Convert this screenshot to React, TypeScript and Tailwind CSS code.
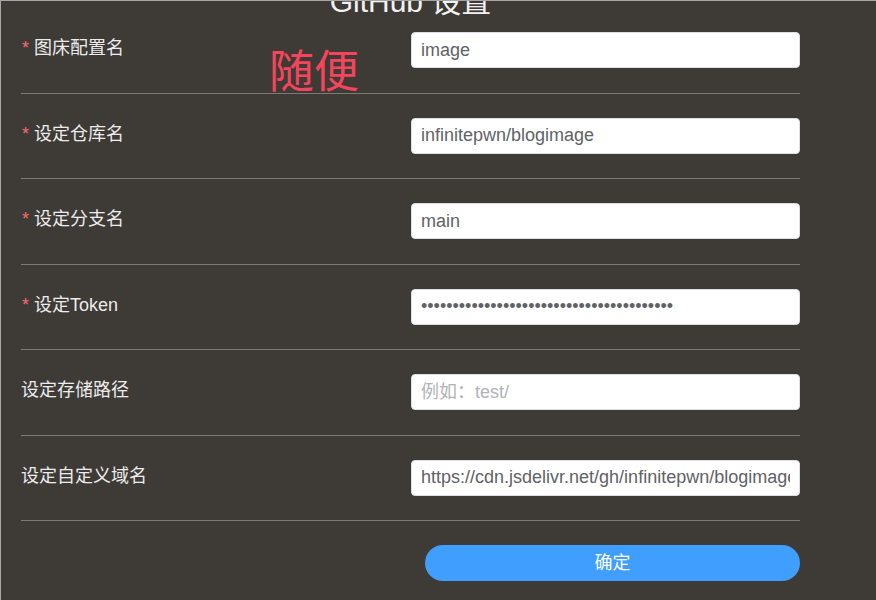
import React from "react";

const fields = [
  { label: "图床配置名", value: "image", required: true },
  { label: "设定仓库名", value: "infinitepwn/blogimage", required: true },
  { label: "设定分支名", value: "main", required: true },
  { label: "设定Token", value: "ghp_0123456789abcdefghijklmnopqrstuvwxyz", required: true, secret: true },
  { label: "设定存储路径", value: "", placeholder: "例如：test/" },
  { label: "设定自定义域名", value: "https://cdn.jsdelivr.net/gh/infinitepwn/blogimage/" },
];

export default function App() {
  return (
    <div
      className="relative h-[600px] w-[876px] overflow-hidden border-l border-t border-[#a6a6a6] bg-[#3e3a36] pl-5"
      style={{ fontFamily: '"Liberation Sans", "Noto Sans CJK SC", sans-serif' }}
    >
      <div className="w-[779px]">
        {/* page is scrolled, so the heading is cut at the top */}
        <h2 className="-mb-[9px] -mt-[14px] text-center text-[30px] leading-[30px] font-normal text-[#f2f2f2]">
          GitHub 设置
        </h2>

        {fields.map((f) => (
          <div
            key={f.label}
            className="flex items-start border-b border-[#7d7975] pb-[24.5px] pt-6"
          >
            <label className="flex-1 text-[18px] leading-[33px] text-[#ececec]">
              {f.required && <span className="ml-[1px] mr-[5px] text-[#f56c6c]">*</span>}
              {f.label}
            </label>
            <input
              type={f.secret ? "password" : "text"}
              defaultValue={f.value}
              placeholder={f.placeholder}
              readOnly
              className="h-9 w-[389px] rounded-[4px] border border-[#dcdfe6] bg-white px-[9px] text-[18px] text-[#606266] outline-none placeholder:text-[#b1b3b8]"
            />
          </div>
        ))}

        <div className="flex justify-end pt-6">
          <button className="h-9 w-[375px] rounded-full bg-[#409eff] text-[18px] text-white">
            确定
          </button>
        </div>
      </div>

      <span className="pointer-events-none absolute left-[268px] top-[42px] text-[45px] leading-[60px] text-[#f5455c]">
        随便
      </span>
    </div>
  );
}
